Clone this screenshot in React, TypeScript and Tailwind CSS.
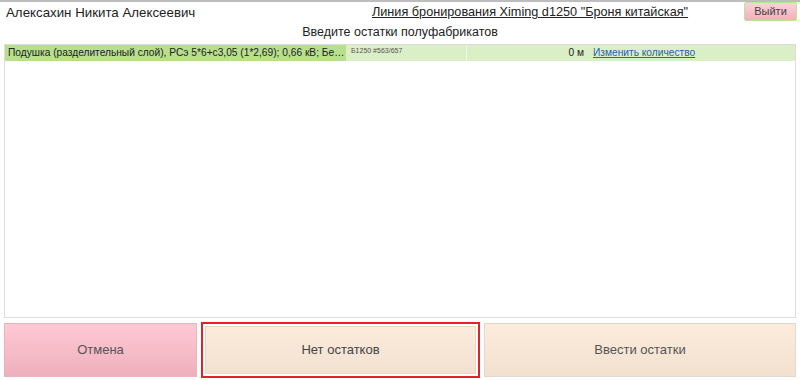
import React from "react";

export default function App() {
  return (
    <div className="w-[800px] h-[380px] bg-white overflow-hidden flex flex-col text-[#222]" style={{ fontFamily: '"Liberation Sans", Arial, sans-serif' }}>
      <div className="h-[2px] bg-[#bdbdbd] shrink-0" />
      <div className="flex items-start h-[21px] pl-[6px] pr-[3px] pt-[4px] shrink-0">
        <div className="text-[13.3px] leading-none w-[310px]">Алексахин Никита Алексеевич</div>
        <div className="flex-1 text-center text-[12.7px] leading-none underline">Линия бронирования Ximing d1250 "Броня китайская"</div>
        <button className="w-[53px] h-[19px] -mt-[4px] text-[11px] text-[#444] border border-[#b8e59a] bg-gradient-to-b from-[#fbd2da] to-[#f2afbd] rounded-[2px]">Выйти</button>
      </div>
      <div className="text-center text-[12.5px] leading-none pt-[3px] h-[21px] shrink-0">Введите остатки полуфабрикатов</div>
      <div className="mx-[4px] h-[274px] border border-[#dcdcdc] shrink-0">
        <div className="flex h-[16px] bg-[#dbefc6] text-[10.2px] leading-none">
          <div className="w-[341px] shrink-0 bg-[#b7df8e] flex items-center pl-[3px] whitespace-nowrap overflow-hidden">Подушка (разделительный слой), РСэ 5*6+с3,05 (1*2,69); 0,66 кВ; Бе…</div>
          <div className="w-[121px] shrink-0 border-r border-[#eef7e4] pl-[5px] pt-[2px] text-[7px] text-[#555] whitespace-nowrap overflow-hidden">Б1250 #563/657</div>
          <div className="w-[121px] shrink-0 flex items-center justify-end pr-[4px]">0 м</div>
          <div className="flex-1 flex items-center pl-[5px]">
            <span className="text-[#2a5db0] underline">Изменить количество</span>
          </div>
        </div>
      </div>
      <div className="flex gap-[4px] px-[4px] pt-[5px] h-[60px] shrink-0">
        <button className="w-[193px] h-[54px] text-[13px] text-[#555] border border-[#e8b4bf] bg-gradient-to-b from-[#ffc9d4] to-[#edb0bc]">Отмена</button>
        <button className="w-[279px] h-[56px] -mt-[1px] text-[13px] text-[#444] border-2 border-[#e32226] p-[2px] bg-white">
          <div className="w-full h-full flex items-center justify-center bg-gradient-to-b from-[#fcecdc] to-[#f2e1cf] border border-[#e5d8c8]">Нет остатков</div>
        </button>
        <button className="flex-1 h-[54px] text-[13px] text-[#555] border border-[#e2d8cc] bg-gradient-to-b from-[#fcecdc] to-[#f2e1cf]">Ввести остатки</button>
      </div>
    </div>
  );
}
